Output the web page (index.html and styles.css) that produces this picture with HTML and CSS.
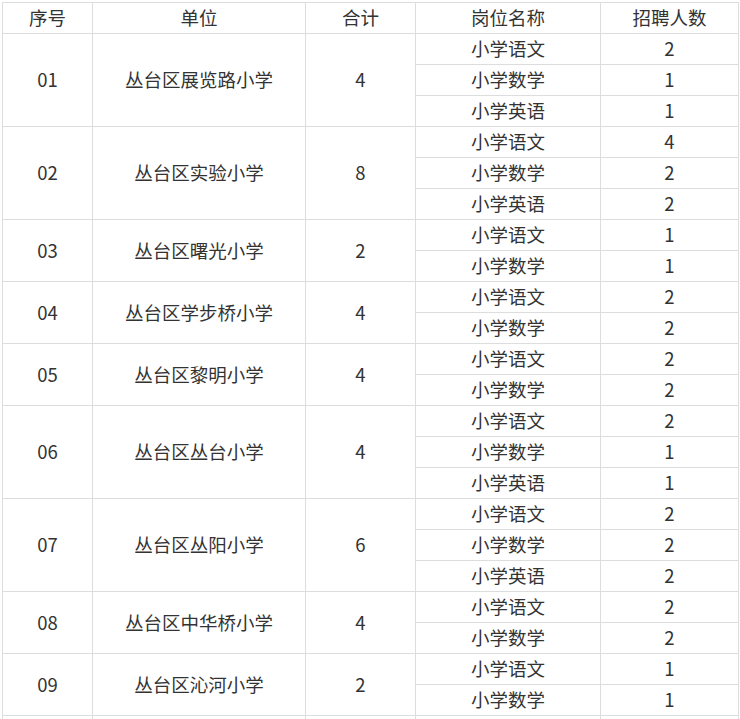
FILE: index.html
```html
<!DOCTYPE html>
<html lang="zh-CN">
<head>
<meta charset="utf-8">
<title>招聘岗位</title>
<link rel="stylesheet" href="styles.css">
</head>
<body>
<div class="wrap">
<table class="jobs">
<colgroup>
<col class="c1"><col class="c2"><col class="c3"><col class="c4"><col class="c5">
</colgroup>
<thead>
<tr><th>序号</th><th>单位</th><th>合计</th><th>岗位名称</th><th>招聘人数</th></tr>
</thead>
<tbody>
<tr><td rowspan="3">01</td><td rowspan="3">丛台区展览路小学</td><td rowspan="3">4</td><td>小学语文</td><td>2</td></tr>
<tr><td>小学数学</td><td>1</td></tr>
<tr><td>小学英语</td><td>1</td></tr>
<tr><td rowspan="3">02</td><td rowspan="3">丛台区实验小学</td><td rowspan="3">8</td><td>小学语文</td><td>4</td></tr>
<tr><td>小学数学</td><td>2</td></tr>
<tr><td>小学英语</td><td>2</td></tr>
<tr><td rowspan="2">03</td><td rowspan="2">丛台区曙光小学</td><td rowspan="2">2</td><td>小学语文</td><td>1</td></tr>
<tr><td>小学数学</td><td>1</td></tr>
<tr><td rowspan="2">04</td><td rowspan="2">丛台区学步桥小学</td><td rowspan="2">4</td><td>小学语文</td><td>2</td></tr>
<tr><td>小学数学</td><td>2</td></tr>
<tr><td rowspan="2">05</td><td rowspan="2">丛台区黎明小学</td><td rowspan="2">4</td><td>小学语文</td><td>2</td></tr>
<tr><td>小学数学</td><td>2</td></tr>
<tr><td rowspan="3">06</td><td rowspan="3">丛台区丛台小学</td><td rowspan="3">4</td><td>小学语文</td><td>2</td></tr>
<tr><td>小学数学</td><td>1</td></tr>
<tr><td>小学英语</td><td>1</td></tr>
<tr><td rowspan="3">07</td><td rowspan="3">丛台区丛阳小学</td><td rowspan="3">6</td><td>小学语文</td><td>2</td></tr>
<tr><td>小学数学</td><td>2</td></tr>
<tr><td>小学英语</td><td>2</td></tr>
<tr><td rowspan="2">08</td><td rowspan="2">丛台区中华桥小学</td><td rowspan="2">4</td><td>小学语文</td><td>2</td></tr>
<tr><td>小学数学</td><td>2</td></tr>
<tr><td rowspan="2">09</td><td rowspan="2">丛台区沁河小学</td><td rowspan="2">2</td><td>小学语文</td><td>1</td></tr>
<tr><td>小学数学</td><td>1</td></tr>
<tr><td></td><td></td><td></td><td></td><td></td></tr>
</tbody>
</table>
</div>
</body>
</html>
```
FILE: styles.css
```css
html, body {
  margin: 0;
  padding: 0;
  background: #ffffff;
}
.wrap {
  padding: 2px 0 0 2px;
}
.jobs {
  border-collapse: collapse;
  table-layout: fixed;
  width: 736px;
  font-family: "Noto Sans CJK SC", "Noto Sans", sans-serif;
  font-size: 18.5px;
  color: #333333;
}
.c1 { width: 90px; }
.c2 { width: 213px; }
.c3 { width: 110px; }
.c4 { width: 185px; }
.c5 { width: 138px; }
.jobs th,
.jobs td {
  border: 1px solid #dddddd;
  height: 31px;
  padding: 0 0 2px 0;
  box-sizing: border-box;
  text-align: center;
  vertical-align: middle;
  font-weight: normal;
  line-height: 24px;
  white-space: nowrap;
}
```
